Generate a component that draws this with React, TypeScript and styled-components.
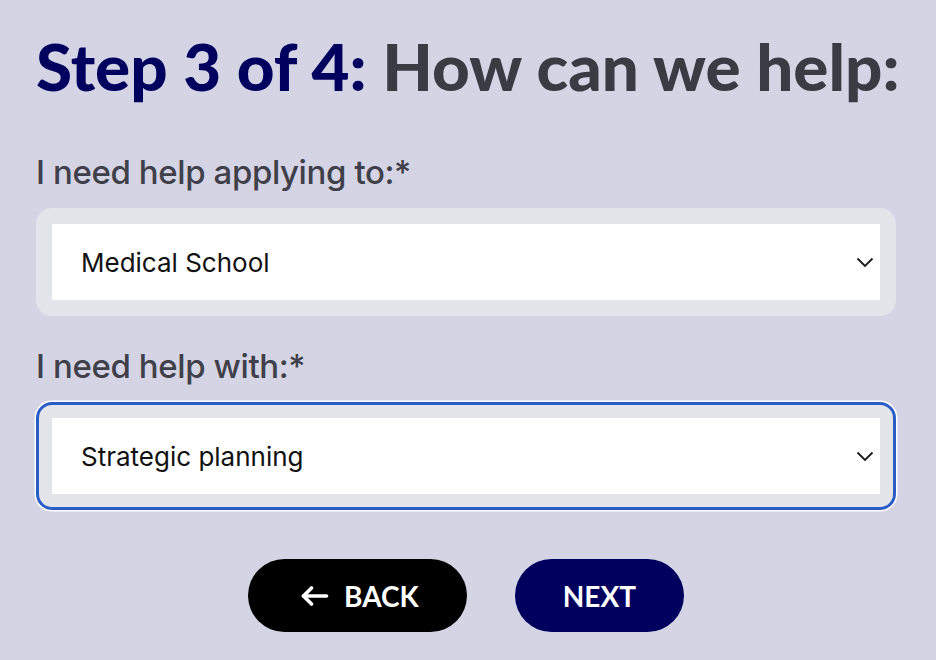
import { FC } from "react";
import styled, { createGlobalStyle } from "styled-components";

const GlobalStyle = createGlobalStyle`
  html, body {
    margin: 0;
    padding: 0;
    background: #d5d4e5;
  }
  body {
    font-family: Inter, "Noto Sans", sans-serif;
  }
`;

interface SelectFieldProps {
  label: string;
  value: string;
  focused?: boolean;
}

const Chevron = () => (
  <svg width='18' height='11' viewBox='0 0 18 11' fill='none'>
    <polyline points='1.5,1.5 9,9 16.5,1.5' stroke='#1a1a1a' strokeWidth='1.8' />
  </svg>
);

const ArrowLeft = () => (
  <svg width='28' height='22' viewBox='0 0 28 22' fill='none'>
    <line x1='25.5' y1='11' x2='2.5' y2='11' stroke='#fff' strokeWidth='3.6' strokeLinecap='round' />
    <polyline
      points='10.5,3 2.5,11 10.5,19'
      stroke='#fff'
      strokeWidth='3.6'
      strokeLinecap='round'
      strokeLinejoin='round'
    />
  </svg>
);

const SelectField: FC<SelectFieldProps> = ({ label, value, focused }) => (
  <FieldStyled>
    <LabelStyled>{label}</LabelStyled>
    <SelectWrapStyled $focused={focused}>
      <SelectBoxStyled>
        <span>{value}</span>
        <Chevron />
      </SelectBoxStyled>
    </SelectWrapStyled>
  </FieldStyled>
);

const App = () => (
  <>
    <GlobalStyle />
    <PageStyled>
      <TitleStyled>
        <StepStyled>Step 3 of 4:</StepStyled> How can we help:
      </TitleStyled>
      <SelectField label='I need help applying to:*' value='Medical School' />
      <SelectField label='I need help with:*' value='Strategic planning' focused />
      <ActionsStyled>
        <ButtonStyled $variant='back'>
          <ArrowLeft />
          BACK
        </ButtonStyled>
        <ButtonStyled $variant='next'>NEXT</ButtonStyled>
      </ActionsStyled>
    </PageStyled>
  </>
);

const PageStyled = styled.main`
  display: flex;
  flex-direction: column;
  padding: 26px 40px 30px 36px;
`;

const TitleStyled = styled.h1`
  margin: 0 0 46px;
  font-family: Lato, "Noto Sans", sans-serif;
  font-size: 65.5px;
  line-height: 80px;
  font-weight: 900;
  color: #3a3b43;
  white-space: nowrap;
`;

const StepStyled = styled.span`
  color: #00005f;
`;

const FieldStyled = styled.div`
  display: flex;
  flex-direction: column;
  margin-bottom: 30px;
`;

const LabelStyled = styled.label`
  font-size: 33px;
  line-height: 40px;
  font-weight: 500;
  letter-spacing: -0.4px;
  color: #40404a;
  margin-bottom: 16px;
`;

const SelectWrapStyled = styled.div<{ $focused?: boolean }>`
  background: #e4e5ea;
  border-radius: 16px;
  padding: ${({ $focused }) => ($focused ? "13px" : "16px")};
  border: ${({ $focused }) => ($focused ? "3px solid #2a5ec6" : "none")};
  box-shadow: ${({ $focused }) => ($focused ? "0 0 0 1.5px #ffffff" : "none")};
`;

const SelectBoxStyled = styled.div`
  display: flex;
  align-items: center;
  justify-content: space-between;
  height: 76px;
  padding: 0 6px 0 29px;
  background: #ffffff;
  font-size: 26px;
  color: #111111;
`;

const ActionsStyled = styled.div`
  display: flex;
  justify-content: center;
  gap: 48px;
  margin-top: 19px;
`;

const ButtonStyled = styled.button<{ $variant: "back" | "next" }>`
  display: flex;
  align-items: center;
  justify-content: center;
  gap: 15px;
  height: 73px;
  padding: ${({ $variant }) => ($variant === "back" ? "0 48px 0 53px" : "0 48px")};
  border: none;
  border-radius: 40px;
  background: ${({ $variant }) => ($variant === "back" ? "#000000" : "#00005f")};
  color: #ffffff;
  font-family: Lato, "Noto Sans", sans-serif;
  font-size: 28px;
  font-weight: 700;
  cursor: pointer;
`;

export default App;
